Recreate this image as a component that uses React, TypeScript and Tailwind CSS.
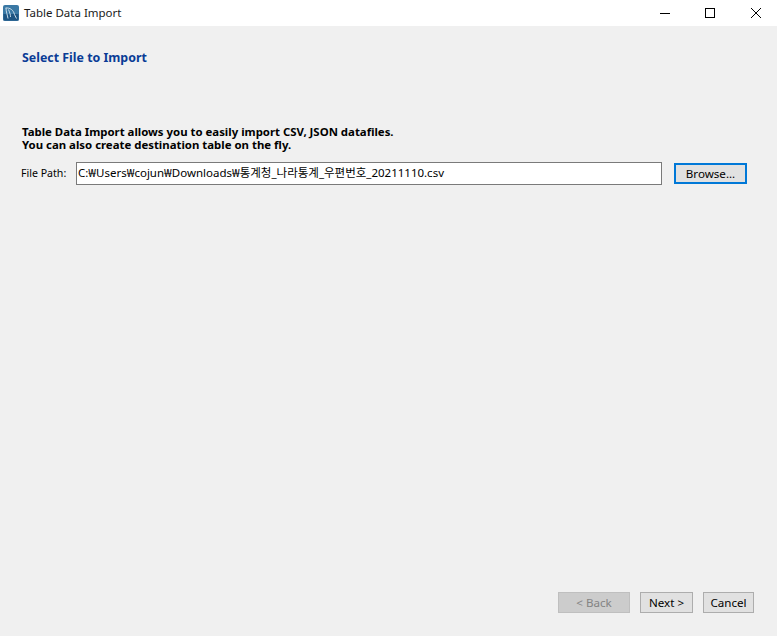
import React from "react";

const WizardButton = ({label, className}: {label: string; className: string}) => (
    <button className={`flex h-[21px] items-center justify-center text-[11.6px] leading-none ${className}`}>
        {label}
    </button>
);

const AppIcon = () => (
    <svg width="16" height="16" viewBox="0 0 16 16" className="ml-[3px]">
        <rect x="0" y="0" width="16" height="16" rx="2" fill="#3a78a4" />
        <rect x="0.5" y="9" width="15" height="6.5" fill="#1f5582" />
        <path d="M2.5 3C7 2.5 10.5 5 11.5 9.5L13.5 13.5M3 3C3 7 4.5 10 5 13.5M5.5 4.5C7 8 7.5 10 7.5 12" fill="none" stroke="#c9dbe8" strokeWidth="1" />
    </svg>
);

const App: React.FC = () => {
    return (
        <div className="flex h-[636px] w-[777px] flex-col overflow-hidden bg-[#f0f0f0] font-['Noto_Sans','Noto_Sans_CJK_KR',sans-serif] text-black">
            <div className="flex h-[26px] items-center bg-white">
                <AppIcon />
                <span className="ml-[5px] text-[11.5px] text-[#1a1a1a]">Table Data Import</span>
                <div className="ml-auto flex items-center">
                    <svg width="10" height="10" viewBox="0 0 10 10" className="mr-[35px]">
                        <path d="M0 5.5H10" stroke="#000" strokeWidth="1" />
                    </svg>
                    <svg width="10" height="10" viewBox="0 0 10 10" className="mr-[36px]">
                        <rect x="0.5" y="0.5" width="9" height="9" fill="none" stroke="#000" strokeWidth="1" />
                    </svg>
                    <svg width="10" height="10" viewBox="0 0 10 10" className="mr-[16px]">
                        <path d="M0 0L10 10M10 0L0 10" stroke="#000" strokeWidth="1" />
                    </svg>
                </div>
            </div>

            <div className="flex flex-1 flex-col px-[22px]">
                <h1 className="mt-[23px] h-[18px] text-[12.4px] leading-[18px] font-bold text-[#0a3c96]">Select File to Import</h1>
                <p className="mt-[58px] text-[11.4px] leading-[13px] font-bold">
                    Table Data Import allows you to easily import CSV, JSON datafiles.
                    <br />
                    You can also create destination table on the fly.
                </p>
                <div className="mt-[11px] flex items-center">
                    <label className="-ml-px w-[55px] text-[10.6px]">File Path:</label>
                    <div className="flex h-[23px] w-[586px] items-center border border-[#7a7a7a] bg-white pb-[2px] pl-[1px] text-[11.5px]">
                        C:₩Users₩cojun₩Downloads₩통계청_나라통계_우편번호_20211110.csv
                    </div>
                    <WizardButton label="Browse..." className="ml-[12px] w-[73px] border-2 border-[#0078d7] bg-[#e1e1e1]" />
                </div>

                <div className="mt-auto mb-[23px] flex justify-end gap-[10px] pr-[1px]">
                    <WizardButton label="< Back" className="w-[72px] border border-[#bfbfbf] bg-[#cccccc] text-[#838383]" />
                    <WizardButton label="Next >" className="w-[53px] border border-[#adadad] bg-[#e1e1e1]" />
                    <WizardButton label="Cancel" className="w-[51px] border border-[#adadad] bg-[#e1e1e1]" />
                </div>
            </div>
        </div>
    );
};

export default App;
